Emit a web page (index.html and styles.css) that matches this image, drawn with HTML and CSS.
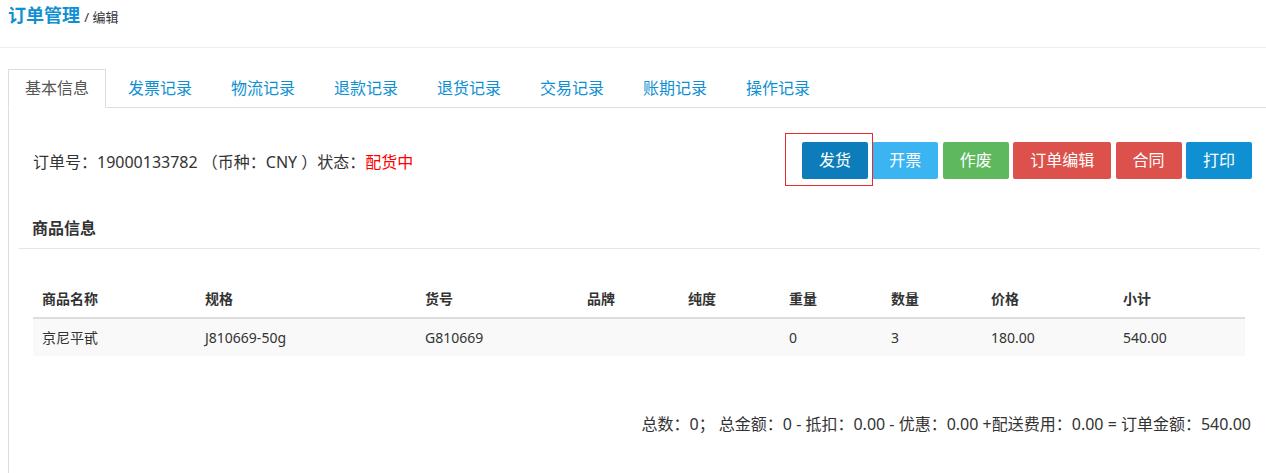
FILE: index.html
```html
<!DOCTYPE html>
<html lang="zh-CN">
<head>
  <meta charset="UTF-8" />
  <title>订单管理 / 编辑</title>
  <link rel="stylesheet" href="styles.css">
</head>
<body>

<div class="page-head">
  <strong class="page-title">订单管理</strong> <small class="page-sub">/ 编辑</small>
</div>

<div class="tabs-wrap">
  <ul class="nav-tabs">
    <li class="active"><a href="#">基本信息</a></li>
    <li><a href="#">发票记录</a></li>
    <li><a href="#">物流记录</a></li>
    <li><a href="#">退款记录</a></li>
    <li><a href="#">退货记录</a></li>
    <li><a href="#">交易记录</a></li>
    <li><a href="#">账期记录</a></li>
    <li><a href="#">操作记录</a></li>
  </ul>

  <div class="tab-panel">
    <div class="order-row">
      <div class="order-info">订单号：19000133782 （币种：CNY ）状态：<span class="status">配货中</span></div>
      <div class="btn-group">
        <span class="mark"><button class="btn btn-primary-active">发货</button></span>
        <button class="btn btn-secondary">开票</button>
        <button class="btn btn-success">作废</button>
        <button class="btn btn-danger">订单编辑</button>
        <button class="btn btn-danger">合同</button>
        <button class="btn btn-primary">打印</button>
      </div>
    </div>

    <div class="section-title">商品信息</div>

    <table class="goods">
      <thead>
        <tr>
          <th class="c-name">商品名称</th>
          <th class="c-spec">规格</th>
          <th class="c-sku">货号</th>
          <th class="c-brand">品牌</th>
          <th class="c-purity">纯度</th>
          <th class="c-weight">重量</th>
          <th class="c-qty">数量</th>
          <th class="c-price">价格</th>
          <th>小计</th>
        </tr>
      </thead>
      <tbody>
        <tr>
          <td>京尼平甙</td>
          <td>J810669-50g</td>
          <td>G810669</td>
          <td></td>
          <td></td>
          <td>0</td>
          <td>3</td>
          <td>180.00</td>
          <td>540.00</td>
        </tr>
      </tbody>
    </table>

    <div class="summary">总数：0； 总金额：0 - 抵扣：0.00 - 优惠：0.00 +配送费用：0.00 = 订单金额：540.00</div>
  </div>
</div>

</body>
</html>
```

FILE: styles.css
```css
html, body {
  margin: 0;
  padding: 0;
  font-family: "Noto Sans", "Noto Sans CJK SC", sans-serif;
  font-size: 16px;
  color: #333;
  background: #fff;
  overflow: hidden;
}

.page-head {
  padding: 4px 8px 0 8px;
  height: 43px;
  border-bottom: 1px solid #eee;
  line-height: 22px;
}

.page-title {
  font-size: 18px;
  color: #0e90d2;
}

.page-sub {
  font-size: 13px;
  color: #333;
}

.tabs-wrap {
  margin-top: 21px;
  padding-left: 8px;
}

.nav-tabs {
  list-style: none;
  margin: 0;
  padding: 0;
  display: flex;
  border-bottom: 1px solid #ddd;
}

.nav-tabs li {
  margin-right: 5px;
  margin-bottom: -1px;
}

.nav-tabs a {
  display: block;
  padding: 8px 16px 9px 16px;
  line-height: 20px;
  border: 1px solid transparent;
  color: #0e90d2;
  text-decoration: none;
}

.nav-tabs li.active a {
  color: #555;
  background: #fff;
  border-color: #ddd;
  border-bottom-color: #fff;
}

.tab-panel {
  border-left: 1px solid #ddd;
  padding: 34px 6px 40px 10px;
}

.order-row {
  display: flex;
  justify-content: space-between;
  align-items: center;
  padding: 0 8px 0 14px;
}

.status {
  color: #f00;
}

.btn-group {
  display: flex;
  gap: 4.4px;
}

.btn {
  font-family: inherit;
  font-size: 16px;
  line-height: 19px;
  padding: 8px 16px;
  border: 1px solid transparent;
  border-radius: 2px;
  color: #fff;
  cursor: pointer;
}

.btn-primary { background: #0e90d2; }
.btn-primary-active { background: #0c7dba; }
.btn-secondary { background: #3bb4f2; }
.btn-success { background: #5eb95e; }
.btn-danger { background: #dd514c; }

.mark {
  position: relative;
  display: inline-block;
}

.mark::after {
  content: "";
  position: absolute;
  top: -9px;
  left: -17px;
  right: -5px;
  bottom: -7px;
  border: 1px solid #e8292e;
  pointer-events: none;
}

.section-title {
  margin-top: 29px;
  padding: 10px 13px 10px 13px;
  line-height: 20px;
  font-weight: 700;
  border-bottom: 1px solid #e6e6e6;
}

.goods {
  width: calc(100% - 29px);
  margin: 31px 15px 0 14px;
  border-collapse: collapse;
  font-size: 14px;
}

.goods th, .goods td {
  text-align: left;
  padding: 8px 9px;
  line-height: 21px;
}

.goods th {
  font-weight: 700;
  border-bottom: 2px solid #ddd;
}

.goods tbody td {
  background: #f9f9f9;
}

.c-name { width: 145px; }
.c-spec { width: 202px; }
.c-sku { width: 144px; }
.c-brand { width: 83px; }
.c-purity { width: 83px; }
.c-weight { width: 84px; }
.c-qty { width: 82px; }
.c-price { width: 114px; }

.summary {
  margin-top: 58px;
  padding-right: 9px;
  text-align: right;
  line-height: 20px;
}
```
